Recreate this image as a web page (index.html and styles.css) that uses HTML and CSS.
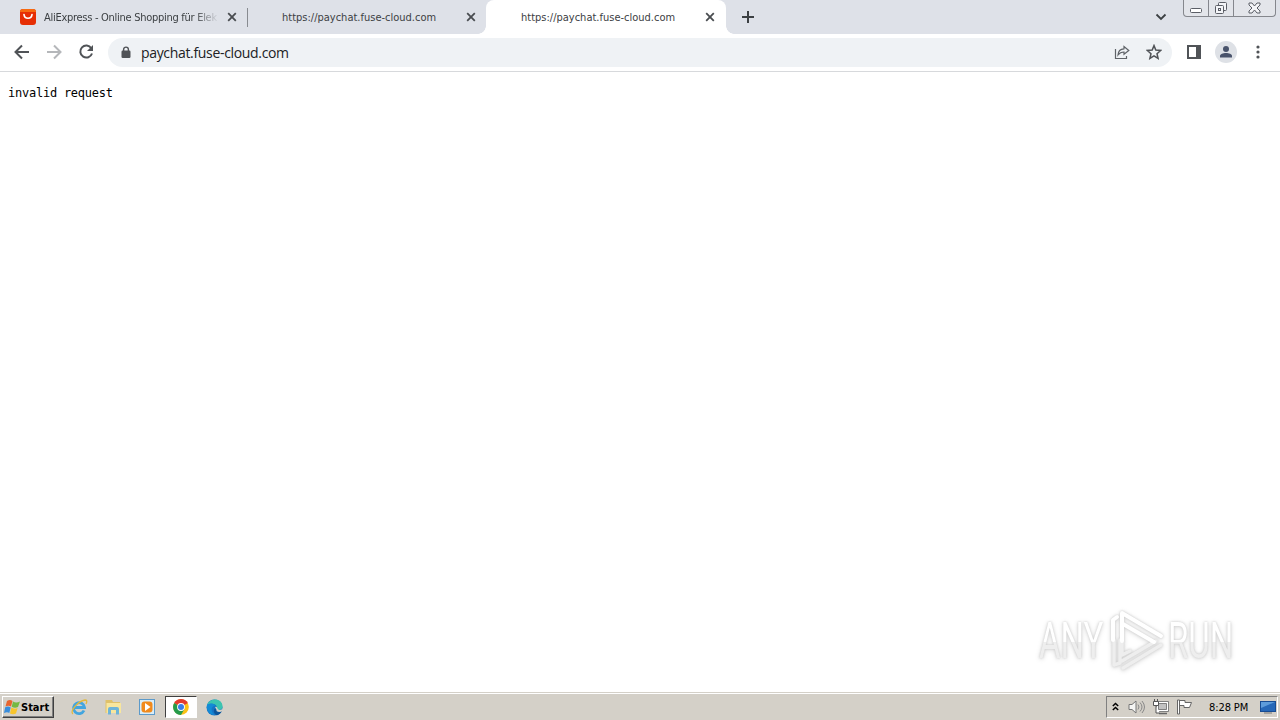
FILE: index.html
```html
<!DOCTYPE html>
<html lang="en">
<head>
    <meta charset="UTF-8">
    <title>paychat.fuse-cloud.com</title>
    <link rel="stylesheet" href="styles.css">
</head>
<body>
<header class="tabstrip">
    <div class="tab tab-first">
        <svg class="favicon" width="16" height="16" viewBox="0 0 16 16"><rect width="16" height="16" rx="3" fill="#e62e04"/><path d="M0 3a3 3 0 0 1 3-3h10a3 3 0 0 1 3 3z" fill="#f76a10"/><path d="M4 5.500c.5 5 7.500 5 8 0" fill="none" stroke="#fff" stroke-width="1.700" stroke-linecap="round"/></svg>
        <span class="tab-title fade">AliExpress - Online Shopping für Elek</span>
        <svg class="close" width="10" height="10" viewBox="0 0 10 10"><path d="M1.200 1.200l7.600 7.600M8.800 1.200L1.200 8.800"/></svg>
    </div>
    <div class="tab tab-second">
        <span class="tab-title">https://paychat.fuse-cloud.com</span>
        <svg class="close" width="10" height="10" viewBox="0 0 10 10"><path d="M1.200 1.200l7.600 7.600M8.800 1.200L1.200 8.800"/></svg>
    </div>
    <div class="tab tab-active">
        <span class="tab-title">https://paychat.fuse-cloud.com</span>
        <svg class="close" width="10" height="10" viewBox="0 0 10 10"><path d="M1.200 1.200l7.600 7.600M8.800 1.200L1.200 8.800"/></svg>
    </div>
    <svg class="new-tab" width="14" height="14" viewBox="0 0 14 14"><path d="M7 1v12M1 7h12" stroke="#3c4043" stroke-width="2"/></svg>
    <svg class="tab-search" width="12" height="8" viewBox="0 0 12 8"><path d="M1.500 1.500L6 6l4.500-4.500" fill="none" stroke="#3c4043" stroke-width="1.800"/></svg>
    <div class="window-buttons">
        <span class="minimize"><svg width="14" height="6" viewBox="0 0 14 6"><rect x="1.500" y="1.500" width="11" height="4" rx="1" fill="#fff" stroke="#5b5e66"/></svg></span>
        <span class="restore"><svg width="14" height="14" viewBox="0 0 14 14"><rect x="4.500" y="1.500" width="8" height="8" rx="1" fill="#f4f5f8" stroke="#5b5e66"/><rect x="1.500" y="4.500" width="8" height="8" rx="1" fill="#f4f5f8" stroke="#5b5e66"/><rect x="4.500" y="7.500" width="2" height="2" fill="none" stroke="#5b5e66"/></svg></span>
        <span class="quit"><svg width="13" height="12" viewBox="0 0 13 12"><path d="M1 1h3l2.500 3L9 1h3v2L9 6l3 3v2H9L6.500 8 4 11H1V9l3-3-3-3z" fill="#f4f5f8" stroke="#5b5e66"/></svg></span>
    </div>
</header>
<nav class="toolbar">
    <svg class="back" width="16" height="16" viewBox="0 0 16 16"><path d="M15 8H2M8 1.500L1.500 8 8 14.500" fill="none" stroke="#505357" stroke-width="2"/></svg>
    <svg class="forward" width="16" height="16" viewBox="0 0 16 16"><path d="M1 8h13M8 1.500L14.500 8 8 14.500" fill="none" stroke="#b5b7ba" stroke-width="2"/></svg>
    <svg class="reload" width="16" height="16" viewBox="0 0 16 16"><path d="M13.300 4.200A6 6 0 1 0 14 9.500" fill="none" stroke="#505357" stroke-width="2"/><path d="M15 1v6H9z" fill="#505357"/></svg>
    <div class="omnibox">
        <svg class="lock" width="10" height="13" viewBox="0 0 10 13"><rect x=".5" y="4.500" width="9" height="7.500" rx="1.200" fill="#505357"/><path d="M2.600 5V3.500a2.400 2.400 0 0 1 4.800 0V5" fill="none" stroke="#505357" stroke-width="1.400"/></svg>
        <span class="url">paychat.fuse-cloud.com</span>
        <svg class="share" width="16" height="15" viewBox="0 0 16 15"><path d="M1.500 4v9.500h11V11" fill="none" stroke="#5f6368" stroke-width="1.200"/><path d="M4 10c.2-4 2.500-6 6-6.200V1.500L14.800 5.500 10 9.300V7C7.500 7 5.500 8 4 10z" fill="none" stroke="#5f6368" stroke-width="1.200"/></svg>
        <svg class="star" width="16" height="16" viewBox="0 0 16 16"><path d="M8 1.600l1.800 4.500 4.900.4-3.700 3.200 1.100 4.700L8 11.900l-4.100 2.500L5 9.700 1.300 6.500l4.900-.4z" fill="none" stroke="#505357" stroke-width="1.500"/></svg>
    </div>
    <svg class="side-panel" width="14" height="14" viewBox="0 0 14 14"><rect x="1" y="1" width="12" height="12" fill="#fff" stroke="#505357" stroke-width="2"/><path d="M9 1h4v12H9z" fill="#505357"/></svg>
    <svg class="avatar" width="22" height="22" viewBox="0 0 22 22"><circle cx="11" cy="11" r="11" fill="#dee1e6"/><circle cx="11" cy="8" r="3" fill="#49536b"/><path d="M5 16.500v-1.500c0-2 3-3 6-3s6 1 6 3v1.500z" fill="#49536b"/></svg>
    <svg class="menu" width="4" height="14" viewBox="0 0 4 14"><g fill="#505357"><circle cx="2" cy="2" r="1.600"/><circle cx="2" cy="7" r="1.600"/><circle cx="2" cy="12" r="1.600"/></g></svg>
</nav>
<main class="page">
    <pre>invalid request</pre>
    <div class="watermark">
        <span class="any">ANY</span>
        <svg class="play" width="60" height="62" viewBox="0 0 60 62"><g fill="none" stroke-linejoin="round" stroke-linecap="round"><path d="M6 30v25l6-2V30M14 31v14l8-4M14 51l34-20M15 58l38-23" stroke="#eee" stroke-width="3.500"/><path d="M14 31V3l39 23M15 14l31 18M9 7L5 10v20" stroke="#fff" stroke-width="4"/></g></svg>
        <span class="run">RUN</span>
    </div>
</main>
<footer class="taskbar">
    <div class="start">
        <svg width="17" height="16" viewBox="0 0 17 16"><path d="M3 2q3-2 5.500 0L7 7.500q-2.500-1.500-5.500 0z" fill="#e8652f"/><path d="M9 2.500q3 2 7 0L14 8q-3 1.500-6.300-.2z" fill="#75b943"/><path d="M1.200 8.200q3-1.500 5.500.2L5.300 14q-2-1.500-5.300 0z" fill="#398ddc"/><path d="M7.400 8.500q3 2 6.200.5L12 14.500q-3 1.500-6 0z" fill="#f8c52c"/></svg>
        <span>Start</span>
    </div>
    <div class="task ie"><svg width="18" height="18" viewBox="0 0 18 18"><path d="M14 12.500A5.500 5.500 0 1 1 14.500 9.500H5" fill="none" stroke="#42a5df" stroke-width="2.800"/><path d="M3 16C-1 14 8 3 15 2q3 0 1 4" fill="none" stroke="#e2b83c" stroke-width="1.300"/></svg></div>
    <div class="task"><svg width="18" height="18" viewBox="0 0 18 18"><path d="M1.500 2H8l1 2h7v11H1.500z" fill="#dfc16a"/><path d="M2.500 5H17v10H2.500z" fill="#f8e69d"/><path d="M4 16.500V11q0-2 2-2h7q2 0 2 2v5.500h-3V12H7v4.500z" fill="#6eb4d8"/></svg></div>
    <div class="task"><svg width="18" height="18" viewBox="0 0 18 18"><rect x="1.500" y="1.500" width="15" height="15" fill="#d9edf8" stroke="#5c9aca"/><rect x="3.500" y="3.500" width="11" height="11" rx="3" fill="#f18a1c"/><path d="M7 5l5.500 4L7 13z" fill="#fff"/></svg></div>
    <div class="task pressed"><svg width="16" height="16" viewBox="0 0 16 16"><circle cx="8" cy="8" r="7.800" fill="#fbc116"/><path d="M8 8L1.100 4A8 8 0 0 1 14.900 4z" fill="#e33b2e"/><path d="M8 8L1.100 4A8 8 0 0 0 8 16l3.500-6z" fill="#269b4b"/><circle cx="8" cy="8" r="3.900" fill="#fff"/><circle cx="8" cy="8" r="3" fill="#397de8"/></svg></div>
    <div class="task edge"><svg width="17" height="17" viewBox="0 0 17 17"><circle cx="8.500" cy="8.500" r="8" fill="#1673c4"/><path d="M1 6C4-2 17-1 16.500 8c0 3-5 4-6 2 2-4-4-7-9.500-4z" fill="#3cc4b0"/><path d="M1 6c4-3 8-1 8 1-5 0-4 7 0 9-5 0-9-4-8-10z" fill="#138bd6"/><path d="M10 9.500c-.500 4 4 4 6 2.500-1 2-3 4-5 4.300C7 15 7 9 10 9.500z" fill="#0c559b"/><path d="M9 8q2 3 1.500 4 3 2 6 0v-2q-4 2-5-.5Q11 7 9 8z" fill="#d4d0c8"/></svg></div>
    <div class="tray">
        <svg class="chevrons" width="7" height="9" viewBox="0 0 7 9"><path d="M.8 4l2.700-2.500L6.200 4M.8 8l2.700-2.500L6.200 8" fill="none" stroke="#000" stroke-width="1.500"/></svg>
        <svg class="sound" width="17" height="16" viewBox="0 0 17 16"><path d="M1 5.500h3L8 2v12l-4-3.500H1z" fill="#f5f5f3" stroke="#777"/><path d="M10 5.500q2 2.500 0 5M12 3.500q4 4.500 0 9M14 2q5 6 0 12" fill="none" stroke="#888"/></svg>
        <svg class="network" width="17" height="16" viewBox="0 0 17 16"><path d="M5.500 3.500h10v8h-10z" fill="#c2c2c2" stroke="#fff" stroke-width="2"/><path d="M4.500 2.500h12v10h-12zM6.500 4.500h8v6h-8z" fill="none" stroke="#666" stroke-width=".8"/><path d="M7 14.500h8" stroke="#666" stroke-width="1.500"/><path d="M1.500 2.500h5v4h-5zM4 7v7h4M2.500 0v3M5.500 0v3" fill="#fff" stroke="#555"/></svg>
        <svg class="flag" width="17" height="16" viewBox="0 0 17 16"><path d="M1.500 1h2v14h-2zM3.500 1.500H9v2h6.500l-2 5H8v-2H3.500z" fill="#fff" stroke="#666"/></svg>
        <span class="clock">8:28 PM</span>
        <svg class="desktop" width="16" height="14" viewBox="0 0 16 14"><rect x=".5" y="1.500" width="15" height="10" fill="#2668b8" stroke="#174c93"/><path d="M1 2h14L1 8z" fill="#5d9cdb"/><path d="M4 13h8" stroke="#777"/></svg>
    </div>
</footer>
</body>
</html>
```

FILE: styles.css
```css
* {
    box-sizing: border-box;
}
html, body {
    height: 100%;
}
body {
    margin: 0;
    display: flex;
    flex-direction: column;
    overflow: hidden;
    background: #fff;
    font-family: "DejaVu Sans Condensed", "DejaVu Sans", sans-serif;
    font-stretch: condensed;
}
svg {
    display: block;
    flex: none;
}
.tabstrip {
    display: flex;
    height: 34px;
    background: #dee1e8;
}
.tab {
    display: flex;
    align-items: center;
    height: 34px;
    padding-right: 11px;
    font-size: 11px;
    color: #3c4043;
}
.tab-first {
    width: 247px;
    padding-left: 20px;
    padding-right: 10px;
}
.tab-second {
    width: 239px;
    padding-left: 35px;
    padding-right: 10px;
    background: linear-gradient(#888b90, #888b90) 0 8px / 1px 19px no-repeat;
}
.tab-active {
    position: relative;
    width: 240px;
    padding-left: 35px;
    background: #fff;
    border-radius: 8px 8px 0 0;
}
.tab-active::before, .tab-active::after {
    content: "";
    position: absolute;
    bottom: 0;
    width: 8px;
    height: 8px;
}
.tab-active::before {
    left: -8px;
    background: radial-gradient(circle at 0 0, #dee1e8 7.5px, #fff 8px);
}
.tab-active::after {
    right: -8px;
    background: radial-gradient(circle at 100% 0, #dee1e8 7.5px, #fff 8px);
}
.tab-title {
    white-space: nowrap;
}
.fade {
    width: 175px;
    margin-left: 8px;
    letter-spacing: -.28px;
    -webkit-mask-image: linear-gradient(90deg, #000 150px, transparent);
    mask-image: linear-gradient(90deg, #000 150px, transparent);
}
.close {
    margin-left: auto;
    fill: none;
    stroke: #494c50;
    stroke-width: 1.8;
}
.new-tab {
    margin: 10px 0 0 15px;
}
.tab-search {
    margin: 13px 16px 0 auto;
}
.window-buttons {
    display: flex;
    width: 93px;
    height: 17px;
    margin-right: 4px;
    border: 1px solid #85878d;
    border-top: 0;
    border-radius: 0 0 4px 4px;
    background: #e3e5ea;
}
.window-buttons span {
    display: flex;
    justify-content: center;
    width: 25px;
    border-right: 1px solid #85878d;
}
.window-buttons .quit {
    width: 41px;
    border-right: 0;
    padding-top: 2px;
}
.restore {
    padding-top: 1px;
}
.minimize {
    padding-top: 7px;
}
.toolbar {
    display: flex;
    align-items: center;
    height: 38px;
    padding: 0 20px 1px 14px;
    border-bottom: 1px solid #d7d9dc;
}
.forward, .reload {
    margin-left: 16px;
}
.omnibox {
    display: flex;
    align-items: center;
    width: 1064px;
    height: 29px;
    margin-left: 14px;
    padding: 0 10px 0 13px;
    border-radius: 15px;
    background: #eff2f5;
}
.url {
    margin-left: 10px;
    font-family: "Open Sans", sans-serif;
    font-stretch: normal;
    font-size: 14px;
    letter-spacing: -.33px;
    color: #202124;
}
.share {
    margin-left: auto;
}
.star {
    margin-left: 16px;
}
.side-panel {
    margin-left: 15px;
}
.avatar {
    margin-left: 14px;
}
.menu {
    margin-left: auto;
}
.page {
    display: flex;
    flex: 1;
    flex-direction: column;
    justify-content: space-between;
    padding: 13px 45px 20px 8px;
}
.page pre {
    margin: 0;
    font: 12px/16px "DejaVu Sans Mono", monospace;
    letter-spacing: -.24px;
    color: #000;
}
.watermark {
    display: flex;
    align-items: center;
    align-self: flex-end;
    height: 62px;
    font-family: Roboto, sans-serif;
    font-stretch: normal;
    font-weight: 400;
    font-size: 50px;
    line-height: 62px;
    filter: drop-shadow(0 0 1px #ccc) drop-shadow(0 1px 2px #ddd);
}
.watermark span {
    white-space: nowrap;
    color: transparent;
    background: linear-gradient(#fff 51%, #eee 51%);
    -webkit-background-clip: text;
    background-clip: text;
}
.watermark .any {
    width: 98px;
    margin-right: -29px;
    transform: scaleX(.66);
    transform-origin: 0 50%;
}
.watermark .run {
    width: 103px;
    margin-right: -36px;
    transform: scaleX(.66);
    transform-origin: 0 50%;
}
.taskbar {
    display: flex;
    align-items: center;
    height: 28px;
    padding: 1px 2px 0 2px;
    border-top: 1px solid #d4d0c8;
    background: #d4d0c8;
    box-shadow: inset 0 1px #fff;
}
.start {
    display: flex;
    align-items: center;
    width: 52px;
    height: 22px;
    padding-left: 1px;
    border: 1px solid;
    border-color: #fff #404040 #404040 #fff;
    box-shadow: inset -1px -1px #808080;
    font-size: 11px;
    font-weight: bold;
}
.task {
    display: flex;
    align-items: center;
    justify-content: center;
    width: 32px;
    height: 22px;
    margin-left: 2px;
}
.ie {
    margin-left: 9px;
}
.edge {
    margin-left: 1px;
}
.pressed {
    border: 1px solid;
    border-color: #404040 #fff #fff #404040;
    background: #fff;
}
.tray {
    display: flex;
    align-items: center;
    width: 172px;
    height: 22px;
    margin-left: auto;
    padding-left: 5px;
    border: 1px solid;
    border-color: #808080 #fff #fff #808080;
}
.chevrons {
    margin-bottom: 2px;
}
.sound {
    margin-left: 9px;
}
.network, .flag {
    margin-left: 7px;
}
.clock {
    margin-left: 16px;
    font-size: 11px;
    letter-spacing: -.1px;
    white-space: nowrap;
}
.desktop {
    margin-left: auto;
    margin-right: 1px;
}
```
